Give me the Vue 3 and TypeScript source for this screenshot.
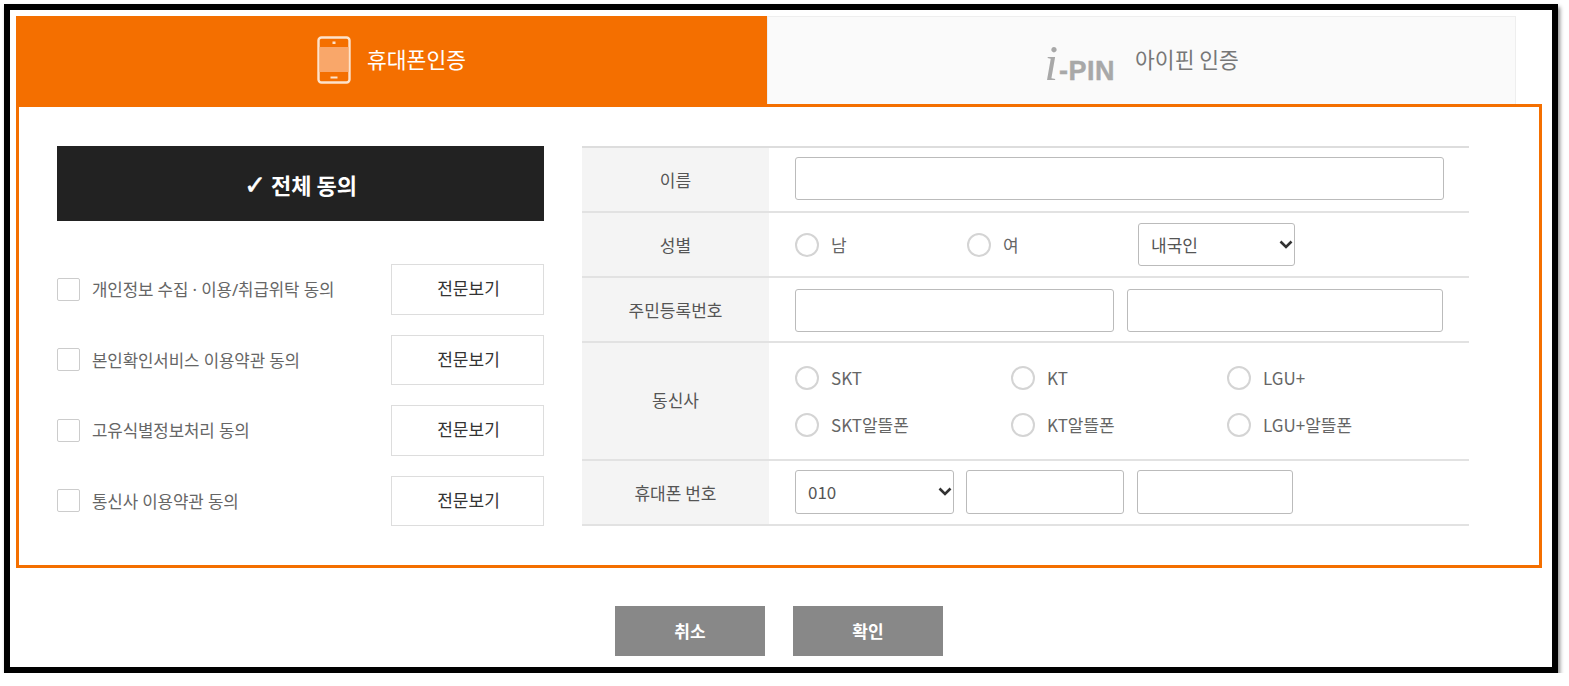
<script setup lang="ts">
interface Item { label: string }
const agreements: Item[] = [
  { label: '개인정보 수집 · 이용/취급위탁 동의' },
  { label: '본인확인서비스 이용약관 동의' },
  { label: '고유식별정보처리 동의' },
  { label: '통신사 이용약관 동의' },
]
const carriers: string[] = ['SKT', 'KT', 'LGU+', 'SKT알뜰폰', 'KT알뜰폰', 'LGU+알뜰폰']
</script>

<template>
  <div class="frame">
    <div class="tabs">
      <div class="tab active">
        <svg class="phone" width="34" height="48" viewBox="0 0 34 48" fill="none">
          <rect x="1.5" y="1.5" width="31" height="45" rx="3" stroke="#fde3cc" stroke-width="2.4" />
          <rect x="2.5" y="11" width="29" height="25" fill="#f9a76a" />
          <rect x="15.5" y="5.5" width="3" height="2.5" fill="#fde3cc" />
          <rect x="13.5" y="40.5" width="7" height="2" fill="#fde3cc" />
        </svg>
        <span class="tab-text">휴대폰인증</span>
      </div>
      <div class="tab other">
        <span class="logo"><i class="logo-i">i</i><b>-PIN</b></span>
        <span>아이핀 인증</span>
      </div>
    </div>

    <div class="panel">
      <section class="left">
        <button class="all" type="button"><span class="tick">✓</span> 전체 동의</button>
        <ul class="list">
          <li v-for="item in agreements" :key="item.label" class="row">
            <label class="agree">
              <input type="checkbox" class="box" />
              <span>{{ item.label }}</span>
            </label>
            <button type="button" class="view">전문보기</button>
          </li>
        </ul>
      </section>

      <div class="table">
        <div class="tr r-name">
          <div class="th">이름</div>
          <div class="td"><input class="field wide" type="text" /></div>
        </div>
        <div class="tr r-gender">
          <div class="th">성별</div>
          <div class="td gender">
            <label class="radio r-man"><input type="radio" name="g" /><span>남</span></label>
            <label class="radio r-woman"><input type="radio" name="g" /><span>여</span></label>
            <select class="field sel-nat"><option>내국인</option></select>
          </div>
        </div>
        <div class="tr r-id">
          <div class="th">주민등록번호</div>
          <div class="td ids">
            <input class="field" type="text" />
            <input class="field" type="text" />
          </div>
        </div>
        <div class="tr r-carrier">
          <div class="th">동신사</div>
          <div class="td carriers">
            <label v-for="c in carriers" :key="c" class="radio"><input type="radio" name="c" /><span>{{ c }}</span></label>
          </div>
        </div>
        <div class="tr r-phone">
          <div class="th">휴대폰 번호</div>
          <div class="td phones">
            <select class="field"><option>010</option></select>
            <input class="field" type="text" />
            <input class="field" type="text" />
          </div>
        </div>
      </div>
    </div>

    <div class="actions">
      <button type="button" class="act">취소</button>
      <button type="button" class="act">확인</button>
    </div>
  </div>
</template>

<style>
html, body { background: #fff; margin: 0; }
</style>

<style scoped>
.frame {
  box-sizing: border-box;
  width: 1554px;
  height: 669px;
  margin: 4px 0 0 4px;
  padding: 6px;
  border: 6px solid #000;
  background: #fff;
  box-shadow: 2px 3px 4px rgba(0, 0, 0, .45);
  font-family: "Noto Sans CJK KR", "Noto Sans", sans-serif;
  color: #555;
  overflow: hidden;
}
.tabs { display: flex; width: 1500px; height: 88px; }
.tab { display: flex; align-items: center; justify-content: center; font-size: 21.5px; box-sizing: border-box; }
.active { width: 751px; height: 90px; background: #f46f00; color: #fff; gap: 16px; position: relative; z-index: 1; padding-bottom: 2px; }
.tab-text { margin-bottom: 4px; }
.other { width: 749px; background: #fafafa; border: 1px solid #eee; border-bottom: 0; color: #777; gap: 20px; padding-bottom: 4px; }
.logo { display: inline-flex; align-items: baseline; color: #a8a8a8; font-family: "Liberation Sans", sans-serif; font-size: 27px; transform: translateY(4px); }
.logo-i { font-family: "Liberation Serif", serif; font-size: 50px; font-style: italic; line-height: 1; margin-right: 1px; }
.logo b { -webkit-text-stroke: .4px #a8a8a8; letter-spacing: .5px; }

.panel {
  box-sizing: border-box;
  width: 1526px;
  height: 464px;
  border: 3px solid #f46f00;
  display: flex;
  padding: 39px 0 0 38px;
  gap: 38px;
  background: #fff;
}
.left { width: 487px; flex: none; }
.all {
  display: block;
  width: 100%;
  height: 75px;
  border: 0;
  background: #222;
  color: #fff;
  font: 700 22px "Noto Sans CJK KR", sans-serif;
  padding: 0;
}
.tick { font-family: "DejaVu Sans", sans-serif; font-size: 26px; -webkit-text-stroke: .6px #fff; }
.list { list-style: none; margin: 43px 0 0; padding: 0; display: flex; flex-direction: column; gap: 20px; }
.row { display: flex; align-items: center; justify-content: space-between; height: 50.5px; }
.agree { display: flex; align-items: center; gap: 12px; font-family: "Noto Sans", "Noto Sans CJK KR", sans-serif; font-size: 16.8px; letter-spacing: -.1px; color: #666; }
.box {
  appearance: none;
  box-sizing: border-box;
  width: 23px;
  height: 23px;
  margin: 0;
  border: 1px solid #ccc;
  border-radius: 2px;
  background: #fff;
}
.view {
  box-sizing: border-box;
  width: 153px;
  height: 100%;
  border: 1px solid #ddd;
  background: #fff;
  color: #333;
  font: 400 17px "Noto Sans CJK KR", sans-serif;
  padding: 0 0 3px 2px;
}

.table { width: 887px; flex: none; border-top: 2px solid #ddd; box-sizing: border-box; height: 380px; }
.tr { display: flex; box-sizing: border-box; border-bottom: 2px solid #e2e2e2; height: 65px; }
.r-carrier { height: 118px; }
.th {
  width: 187px;
  flex: none;
  background: #f4f4f4;
  display: flex;
  align-items: center;
  justify-content: center;
  font-size: 17px;
  color: #555;
}
.r-carrier .th { padding-bottom: 4px; box-sizing: border-box; }
.td { flex: 1; display: flex; align-items: center; padding-left: 26px; min-width: 0; }
.r-name .td { padding-bottom: 3px; }
.field {
  box-sizing: border-box;
  height: 43px;
  border: 1px solid #bbb;
  border-radius: 3px;
  background: #fff;
  font: 17px "Noto Sans CJK KR", sans-serif;
  color: #555;
  padding: 0 12px;
  margin: 0;
}
select.field {
  appearance: none;
  background: #fff url("data:image/svg+xml,%3Csvg xmlns='http://www.w3.org/2000/svg' width='14' height='9' viewBox='0 0 14 9'%3E%3Cpath d='M1.5 1.5 7 7l5.5-5.5' fill='none' stroke='%23333' stroke-width='2.6'/%3E%3C/svg%3E") no-repeat right 1px center;
}
.wide { width: 649px; }
.radio { display: inline-flex; align-items: center; gap: 12px; font-size: 17px; color: #666; }
.radio input {
  appearance: none;
  box-sizing: border-box;
  width: 24px;
  height: 24px;
  margin: 0;
  border: 2px solid #d4d4d4;
  border-radius: 50%;
  background: #fff;
}
.r-man { width: 172px; }
.r-woman { width: 171px; }
.sel-nat { width: 157px; }
.ids { gap: 13px; padding-top: 1px; }
.ids .field:nth-child(1) { width: 319px; }
.ids .field:nth-child(2) { width: 316px; }
.carriers {
  display: grid;
  grid-template-columns: 216px 216px 216px;
  grid-auto-rows: 47px;
  align-content: center;
  justify-content: start;
}
.phones { gap: 13px; padding-bottom: 2px; }
.phones .field { height: 44px; }
.phones .field:nth-child(1) { width: 159px; margin-right: -1px; }
.phones .field:nth-child(2) { width: 158px; }
.phones .field:nth-child(3) { width: 156px; }

.actions { display: flex; justify-content: center; gap: 28px; width: 1526px; margin-top: 38px; }
.act {
  width: 150px;
  height: 50px;
  border: 0;
  background: #888;
  color: #fff;
  font: 700 17px "Noto Sans CJK KR", sans-serif;
  padding: 0 0 2px;
}
</style>
